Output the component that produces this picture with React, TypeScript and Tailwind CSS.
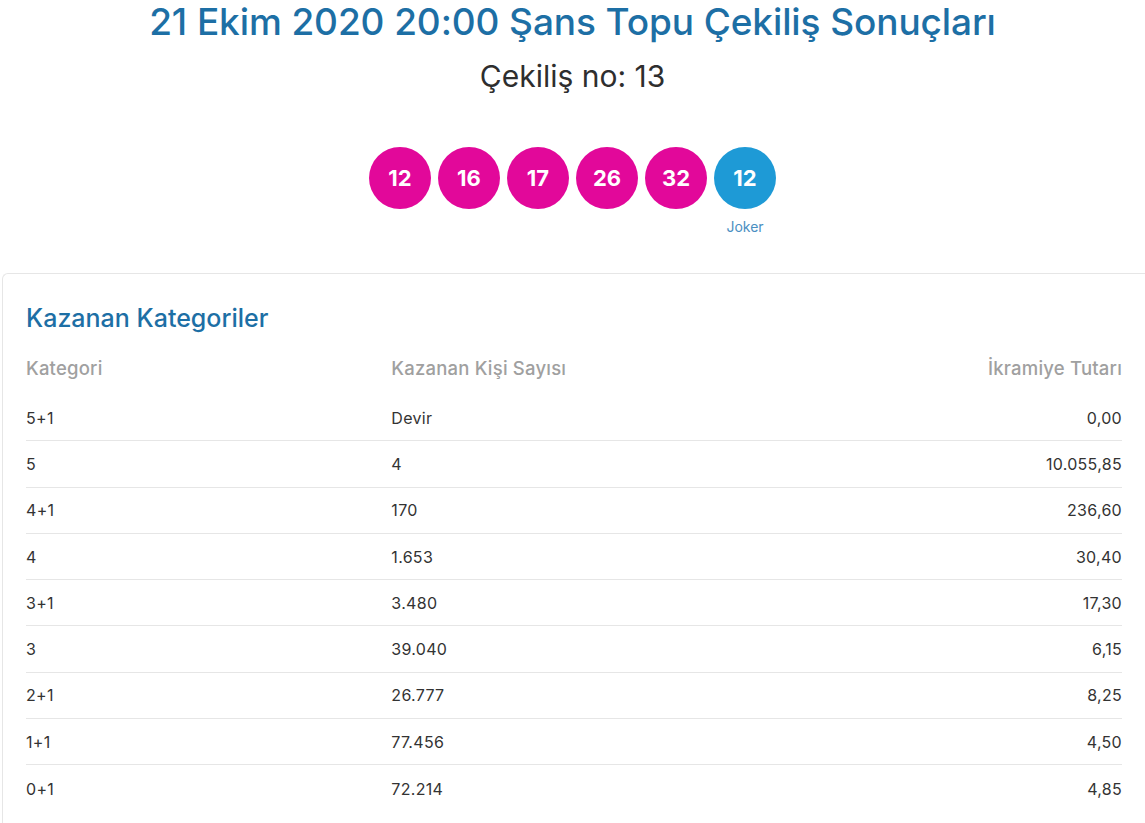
const balls = [12, 16, 17, 26, 32];

const rows = [
  { cat: '5+1', count: 'Devir', prize: '0,00' },
  { cat: '5', count: '4', prize: '10.055,85' },
  { cat: '4+1', count: '170', prize: '236,60' },
  { cat: '4', count: '1.653', prize: '30,40' },
  { cat: '3+1', count: '3.480', prize: '17,30' },
  { cat: '3', count: '39.040', prize: '6,15' },
  { cat: '2+1', count: '26.777', prize: '8,25' },
  { cat: '1+1', count: '77.456', prize: '4,50' },
  { cat: '0+1', count: '72.214', prize: '4,85' },
];

export default function App() {
  return (
    <div className="min-h-screen bg-white font-['Inter','Noto_Sans',sans-serif]">
      <div className="flex flex-col items-center">
        <h1 className="text-[37px] leading-[44px] font-medium text-[#1d6fa5] tracking-[-0.1px]">
          21 Ekim 2020 20:00 Şans Topu Çekiliş Sonuçları
        </h1>
        <p className="mt-[12px] text-[30px] leading-[40px] text-[#2e2e2e]">Çekiliş no: 13</p>

        <div className="mt-[51px] flex gap-[7px]">
          {balls.map((b, i) => (
            <div key={i} className="flex flex-col items-center">
              <div className="flex h-[62px] w-[62px] items-center justify-center rounded-full bg-[#e2089a] text-[22px] font-bold text-white">
                {b}
              </div>
            </div>
          ))}
          <div className="flex flex-col items-center">
            <div className="flex h-[62px] w-[62px] items-center justify-center rounded-full bg-[#1e9ad6] text-[22px] font-bold text-white">
              12
            </div>
            <span className="mt-[9px] text-[14px] leading-[18px] text-[#4a8fc2]">Joker</span>
          </div>
        </div>
      </div>

      <div className="mt-[37px] ml-[2px] rounded-tl-[6px] border-t border-l border-[#e6e6e6] pt-[26px] pb-[14px] pl-[23px] pr-[23px]">
        <h2 className="text-[25px] leading-[36px] font-medium text-[#1d6fa5]">Kazanan Kategoriler</h2>

        <div className="mt-[21px] grid grid-cols-3 pb-[4px] text-[18.5px] font-medium leading-[22px] text-[#a0a0a0] tracking-[0.2px]">
          <span>Kategori</span>
          <span>Kazanan Kişi Sayısı</span>
          <span className="text-right">İkramiye Tutarı</span>
        </div>

        <div className="mt-[12px]">
          {rows.map((r, i) => (
            <div
              key={i}
              className={`grid h-[46.3px] grid-cols-3 items-center text-[16px] text-[#333] tracking-[0.3px] ${
                i < rows.length - 1 ? 'border-b border-[#e6e6e6]' : ''
              }`}
            >
              <span>{r.cat}</span>
              <span>{r.count}</span>
              <span className="text-right">{r.prize}</span>
            </div>
          ))}
        </div>
      </div>
    </div>
  );
}
